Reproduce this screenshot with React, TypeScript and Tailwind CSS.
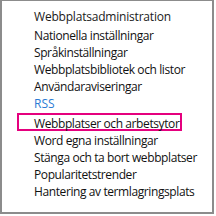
import React from "react";

const items = [
  "Nationella inställningar",
  "Språkinställningar",
  "Webbplatsbibliotek och listor",
  "Användaraviseringar",
];

const after = [
  "Word egna inställningar",
  "Stänga och ta bort webbplatser",
  "Popularitetstrender",
  "Hantering av termlagringsplats",
];

export default function App() {
  return (
    <div className="w-[216px] h-[216px] bg-white">
      <div
        className="w-[214px] h-[214px] border-l-2 border-t border-r-2 border-b-2 border-[#8c8c8c] pl-[32px] pt-[7px] text-[#111] text-[12px] leading-[17px]"
        style={{ fontFamily: '"Open Sans", "DejaVu Sans", sans-serif' }}
      >
        <div className="text-[12px] leading-[17px] text-[#1a1a1a] mb-[2px] tracking-[-0.2px]">Webbplatsadministration</div>
        {items.map((t) => (
          <div key={t} className="tracking-[-0.4px]">{t}</div>
        ))}
        <div className="text-[#2b7bd4]">RSS</div>
        <div className="relative mt-[3px]">
          <div className="absolute left-[-17px] top-[-2px] w-[165px] h-[18px] border-2 border-[#e5007e]" />
          <div className="relative tracking-[-0.4px]">Webbplatser och arbetsytor</div>
        </div>
        {after.map((t) => (
          <div key={t} className="tracking-[-0.4px]">{t}</div>
        ))}
      </div>
    </div>
  );
}
